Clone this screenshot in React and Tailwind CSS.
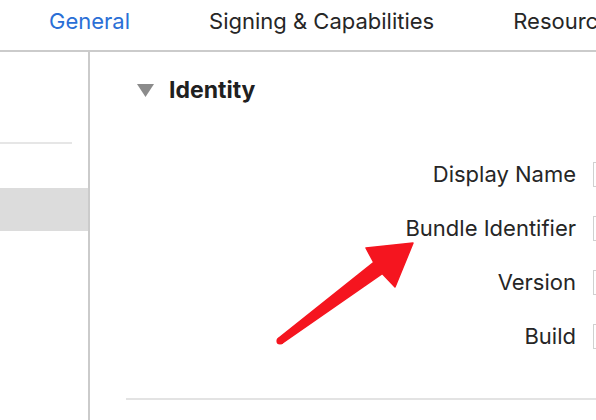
import React from "react";

const rows = ["Display Name", "Bundle Identifier", "Version", "Build"];

const App = () => {
  return (
    <div className="relative w-[596px] h-[420px] overflow-hidden bg-white font-['Inter','Liberation_Sans',sans-serif] text-[#262626]">
      {/* Tabs */}
      <div className="h-[52px] flex items-start pt-[5px] border-b-2 border-[#cbcbcb] text-[22px] whitespace-nowrap">
        <span className="ml-[49px] text-[#2a6fd6]">General</span>
        <span className="ml-[79px]">Signing &amp; Capabilities</span>
        <span className="ml-[79px]">Resources</span>
      </div>

      <div className="flex h-[368px]">
        {/* Sidebar */}
        <div className="w-[90px] shrink-0 border-r-2 border-[#cbcbcb] pt-[90px]">
          <div className="w-[72px] h-[2px] bg-[#e6e6e6]" />
          <div className="mt-[44px] h-[43px] bg-[#dcdcdc]" />
        </div>

        {/* Main */}
        <div className="flex-1 flex flex-col">
          <div className="flex items-center h-[30px] mt-[23px] pl-[47px] gap-[15px]">
            <svg width="17" height="14" viewBox="0 0 17 14">
              <polygon points="0,1 17,1 8.5,14" fill="#8b8b8b" />
            </svg>
            <span className="text-[23px] font-bold text-[#202020]">Identity</span>
          </div>

          <div className="mt-[57px] flex flex-col gap-[29px]">
            {rows.map((r) => (
              <div key={r} className="flex items-center h-[25px] whitespace-nowrap">
                <span className="w-[486px] text-right text-[22px]">{r}</span>
                <div className="ml-[17px] w-[200px] h-[25px] shrink-0 border border-[#d0d0d0] bg-white" />
              </div>
            ))}
          </div>

          <div className="mt-[49px] ml-[36px] h-[2px] bg-[#e3e3e3]" />
        </div>
      </div>

      {/* Annotation arrow */}
      <svg className="absolute inset-0 pointer-events-none" width="596" height="420" viewBox="0 0 596 420">
        <polygon
          points="278.2,338.6 373.8,262.4 366,248 413,243 395,287 382.2,273.6 281.8,343.4"
          fill="#f5151f"
          stroke="#f5151f"
          strokeWidth="1.5"
          strokeLinejoin="round"
        />
        <circle cx="280" cy="341" r="3.6" fill="#f5151f" />
      </svg>
    </div>
  );
};

export default App;
